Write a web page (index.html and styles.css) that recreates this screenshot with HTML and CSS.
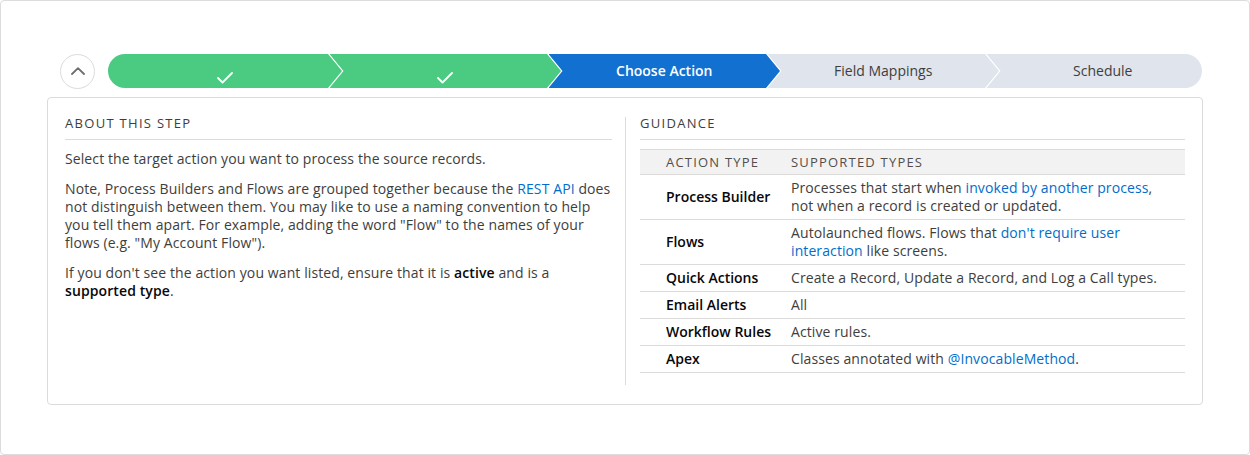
FILE: index.html
```html
<!DOCTYPE html>
<html lang="en">
<head>
<meta charset="utf-8">
<title>Choose Action</title>
<link rel="stylesheet" href="styles.css">
</head>
<body>
<div class="frame">
  <div class="path-row">
    <button class="toggle" type="button" aria-label="Collapse">
      <svg width="14" height="8" viewBox="0 0 14 8"><polyline points="1,7 7,1.2 13,7" fill="none" stroke="#706e6b" stroke-width="1.8" stroke-linecap="round" stroke-linejoin="round"/></svg>
    </button>
    <ol class="path">
      <li class="step done"><svg class="check" width="16" height="12" viewBox="0 0 16 12"><polyline points="1,6 5.5,10.5 15,1" fill="none" stroke="#fff" stroke-width="1.8" stroke-linecap="round" stroke-linejoin="round"/></svg></li>
      <li class="step done"><svg class="check" width="16" height="12" viewBox="0 0 16 12"><polyline points="1,6 5.5,10.5 15,1" fill="none" stroke="#fff" stroke-width="1.8" stroke-linecap="round" stroke-linejoin="round"/></svg></li>
      <li class="step current">Choose Action</li>
      <li class="step todo">Field Mappings</li>
      <li class="step todo">Schedule</li>
    </ol>
  </div>
  <div class="card">
    <section class="col col-left">
      <h2 class="col-title">About this step</h2>
      <p>Select the target action you want to process the source records.</p>
      <p>Note, Process Builders and Flows are grouped together because the <a href="#">REST API</a> does not distinguish between them. You may like to use a naming convention to help you tell them apart. For example, adding the word "Flow" to the names of your flows (e.g. "My Account Flow").</p>
      <p>If you don't see the action you want listed, ensure that it is <strong>active</strong> and is a <strong>supported type</strong>.</p>
    </section>
    <section class="col col-right">
      <h2 class="col-title">Guidance</h2>
      <table class="guide">
        <colgroup><col class="c1"><col></colgroup>
        <thead>
          <tr><th>Action Type</th><th>Supported Types</th></tr>
        </thead>
        <tbody>
          <tr><td>Process Builder</td><td>Processes that start when <a href="#">invoked by another process</a>,<br>not when a record is created or updated.</td></tr>
          <tr><td>Flows</td><td>Autolaunched flows. Flows that <a href="#">don't require user<br>interaction</a> like screens.</td></tr>
          <tr><td>Quick Actions</td><td>Create a Record, Update a Record, and Log a Call types.</td></tr>
          <tr><td>Email Alerts</td><td>All</td></tr>
          <tr><td>Workflow Rules</td><td>Active rules.</td></tr>
          <tr><td>Apex</td><td>Classes annotated with <a href="#">@InvocableMethod</a>.</td></tr>
        </tbody>
      </table>
    </section>
  </div>
</div>
</body>
</html>
```

FILE: styles.css
```css
* { box-sizing: border-box; }
html, body { margin: 0; padding: 0; background: #fff; }
body {
  font-family: "Open Sans", "Liberation Sans", sans-serif;
  font-size: 14px;
  line-height: 18px;
  color: #3e3e3c;
}
.frame {
  width: 1250px;
  height: 455px;
  border: 1px solid #dcdcdc;
  border-radius: 4px;
  padding: 53px 46px 0 46px;
}
.path-row {
  display: flex;
  align-items: center;
  padding-left: 13px;
  gap: 13px;
  height: 34px;
}
.toggle {
  flex: 0 0 35px;
  width: 35px;
  height: 35px;
  border: 1px solid #dddbda;
  border-radius: 50%;
  background: #fff;
  display: flex;
  align-items: center;
  justify-content: center;
  padding: 0;
}
.path {
  flex: 1;
  display: flex;
  list-style: none;
  margin: 0;
  padding: 0;
  height: 34px;
}
.step {
  display: flex;
  align-items: center;
  justify-content: center;
  height: 34px;
  padding: 0 14px;
  margin-left: -12.5px;
  flex: 0 0 231.5px;
  font-size: 14px;
  clip-path: polygon(0 0, calc(100% - 14px) 0, 100% 50%, calc(100% - 14px) 100%, 0 100%, 14px 50%);
}
.step:first-child {
  margin-left: 0;
  flex-basis: 234px;
  border-radius: 17px 0 0 17px;
  clip-path: polygon(0 0, calc(100% - 14px) 0, 100% 50%, calc(100% - 14px) 100%, 0 100%);
}
.step:last-child {
  flex-basis: 215.5px;
  padding: 0 0 0 17px;
  border-radius: 0 17px 17px 0;
  clip-path: polygon(0 0, 100% 0, 100% 100%, 0 100%, 14px 50%);
}
.done { background: #4bca81; }
.check { margin-top: 13px; }
.current { background: #1170d0; color: #fff; font-weight: 600; }
.todo { background: #dfe4ed; color: #3e3e3c; }
.card {
  margin-top: 9px;
  border: 1px solid #dddbda;
  border-radius: 4px;
  padding: 19px 17px;
  display: grid;
  grid-template-columns: 1fr 1fr;
}
.col { padding-bottom: 12px; }
.col-left { padding-right: 13px; }
.col-right { border-left: 1px solid #dddbda; padding-left: 14px; }
.col-title {
  margin: 0;
  font-size: 13px;
  font-weight: 400;
  line-height: 12px;
  letter-spacing: 1.3px;
  text-transform: uppercase;
  padding-bottom: 10px;
  border-bottom: 1px solid #dddbda;
  color: #3e3e3c;
}
.col-left .col-title { margin-bottom: 10px; }
p { margin: 0 0 12px; letter-spacing: 0.1px; }
a { color: #006dcc; text-decoration: none; }
strong { font-weight: 600; color: #080707; }
.guide {
  width: 100%;
  margin-top: 9px;
  border-collapse: collapse;
  table-layout: fixed;
}
.c1 { width: 143px; }
.guide th {
  background: #f3f2f2;
  font-size: 13px;
  font-weight: 400;
  text-transform: uppercase;
  letter-spacing: 1.2px;
  text-align: left;
  padding: 3px 8px;
  border-top: 1px solid #dddbda;
  border-bottom: 1px solid #dddbda;
  color: #514f4d;
}
.guide td {
  padding: 4px 8px;
  border-bottom: 1px solid #dddbda;
  vertical-align: middle;
  text-align: left;
  letter-spacing: 0.1px;
}
.guide th:first-child, .guide td:first-child { padding-left: 26px; }
.guide td:first-child { font-weight: 600; color: #080707; letter-spacing: 0; }
```
